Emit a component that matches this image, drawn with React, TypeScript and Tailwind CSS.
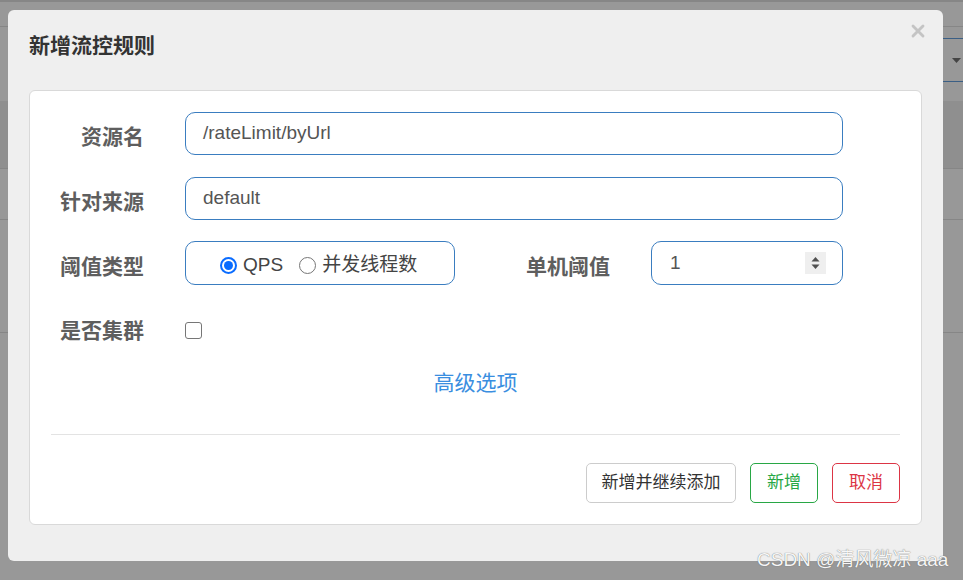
import { X } from "lucide-react";

const font = "font-['Liberation_Sans','Noto_Sans_CJK_SC',sans-serif]";

function FieldLabel({ text }: { text: string }) {
  return (
    <div className="w-[93px] shrink-0 pt-[7px] text-right text-[21px] leading-[30px] font-bold text-[#5e5e5e]">
      {text}
    </div>
  );
}

function Radio({ checked }: { checked?: boolean }) {
  if (checked) {
    return (
      <span className="flex h-[17px] w-[17px] shrink-0 items-center justify-center rounded-full border-2 border-[#0a6cff] bg-white">
        <span className="h-[9px] w-[9px] rounded-full bg-[#0a6cff]" />
      </span>
    );
  }
  return <span className="block h-[17px] w-[17px] shrink-0 rounded-full border border-[#767676] bg-white" />;
}

function Spinner() {
  return (
    <svg width="21" height="22" viewBox="0 0 21 22" className="bg-[#efefef]">
      <path d="M6.5 9.5 L14.5 9.5 L10.5 5 Z" fill="#505050" />
      <path d="M6.5 12.5 L14.5 12.5 L10.5 17 Z" fill="#505050" />
    </svg>
  );
}

export default function App() {
  return (
    <div className={`relative h-[580px] w-[963px] overflow-hidden bg-[#989898] ${font}`}>
      {/* page behind the backdrop */}
      <div className="flex flex-col">
        <div className="h-[27px] border-t-2 border-b border-[#868686]" />
        <div className="flex h-[74px] justify-end pt-[11px]">
          <div className="flex h-[44px] w-[200px] items-center justify-end border-y border-[#3b5f85] pr-[2px]">
            <svg width="9" height="5" viewBox="0 0 9 5">
              <path d="M0 0 L9 0 L4.5 5 Z" fill="#444" />
            </svg>
          </div>
        </div>
        <div className="h-[68px] border-b border-[#868686] bg-[#8f8f8f]" />
        <div className="h-[51px] border-b border-[#868686]" />
        <div className="h-[113px] border-b border-[#868686]" />
      </div>

      <div className="absolute left-[8px] top-[10px] flex h-[551px] w-[935px] flex-col rounded-[6px] bg-[#efefef] px-[21px]">
        <div className="flex h-[80px] items-start justify-between">
          <h4 className="mt-[21px] text-[21px] leading-[30px] font-bold text-[#333]">新增流控规则</h4>
          <X className="-mr-[6px] mt-[11px] h-[20px] w-[20px] text-[#c4c4c4]" strokeWidth={3.4} />
        </div>

        <div className="flex h-[435px] flex-col rounded-[6px] border border-[#d9d9d9] bg-white px-[21px] pt-[21px]">
          <div className="flex h-[43px] items-center">
            <FieldLabel text="资源名" />
            <div className="ml-[41px] flex h-[43px] w-[658px] items-center rounded-[10px] border border-[#3a7dc0] px-[17px] text-[19px] text-[#555]">
              /rateLimit/byUrl
            </div>
          </div>

          <div className="mt-[22px] flex h-[43px] items-center">
            <FieldLabel text="针对来源" />
            <div className="ml-[41px] flex h-[43px] w-[658px] items-center rounded-[10px] border border-[#3a7dc0] px-[17px] text-[19px] text-[#555]">
              default
            </div>
          </div>

          <div className="mt-[21px] flex h-[44px] items-center">
            <FieldLabel text="阈值类型" />
            <div className="ml-[41px] flex h-[44px] w-[270px] items-center rounded-[10px] border border-[#3a7dc0] pl-[34px] pt-[5px] text-[#444]">
              <Radio checked />
              <span className="ml-[6px] text-[19px]">QPS</span>
              <span className="ml-[16px]">
                <Radio />
              </span>
              <span className="ml-[6px] text-[19px]">并发线程数</span>
            </div>
            <div className="w-[155px] pt-[7px] text-right text-[21px] leading-[30px] font-bold text-[#5e5e5e]">
              单机阈值
            </div>
            <div className="ml-[41px] flex h-[44px] w-[192px] items-center justify-between rounded-[10px] border border-[#3a7dc0] pl-[18px] pr-[16px] text-[19px] text-[#555]">
              <span>1</span>
              <Spinner />
            </div>
          </div>

          <div className="mt-[21px] flex h-[43px] items-center">
            <FieldLabel text="是否集群" />
            <span className="ml-[41px] mt-[6px] h-[17px] w-[17px] rounded-[3px] border border-[#767676]" />
          </div>

          <div className="mt-[19px] text-center text-[21px] leading-[30px] text-[#3a8ee0]">高级选项</div>

          <div className="mt-[36px] h-px bg-[#e3e3e3]" />

          <div className="mt-[28px] flex justify-end gap-[14px] text-[17px]">
            <button className="h-[40px] w-[150px] rounded-[5px] border border-[#cccccc] bg-white text-[#333]">
              新增并继续添加
            </button>
            <button className="h-[40px] w-[68px] rounded-[5px] border border-[#28a745] bg-white text-[#28a745]">
              新增
            </button>
            <button className="h-[40px] w-[68px] rounded-[5px] border border-[#dc3545] bg-white text-[#dc3545]">
              取消
            </button>
          </div>
        </div>
      </div>

      <div className="absolute left-[757px] top-[550px] text-[19px] leading-[20px] text-[#f6f6f6] [text-shadow:0_0_1px_#555]">
        CSDN @清风微凉 aaa
      </div>
    </div>
  );
}
